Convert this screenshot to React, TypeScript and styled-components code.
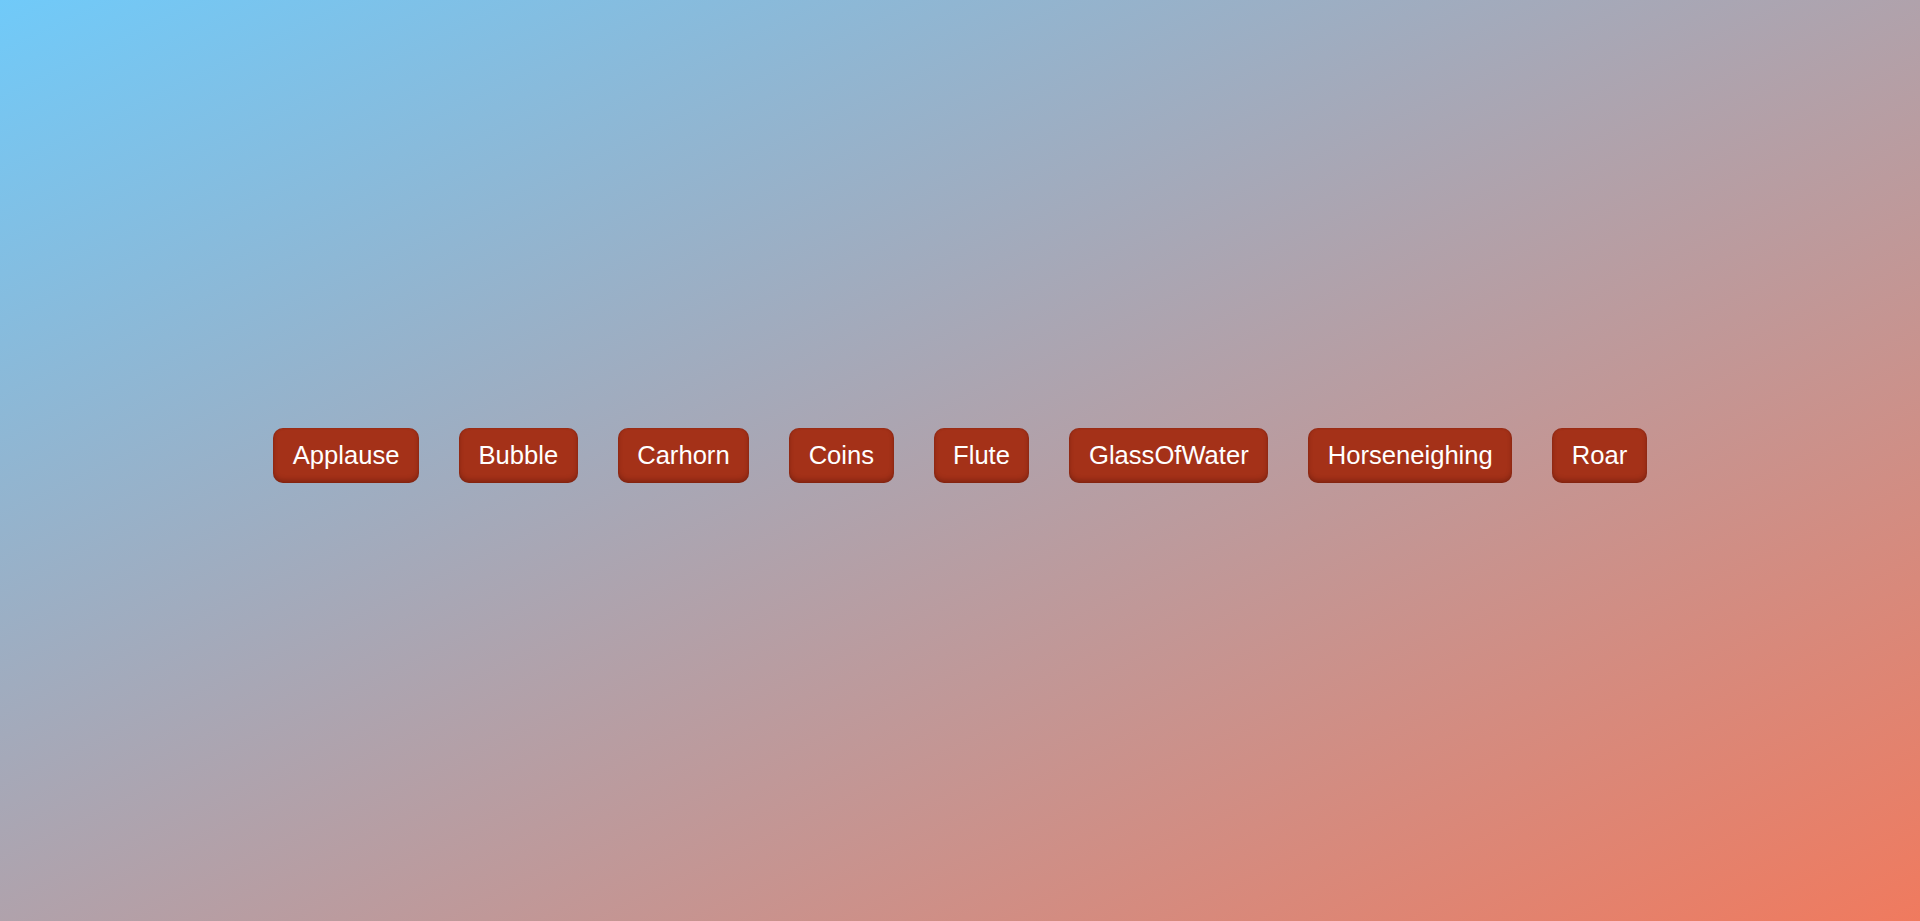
import React from "react";
import styled, { createGlobalStyle } from "styled-components";

const Global = createGlobalStyle`
  html, body { margin: 0; padding: 0; }
  body {
    font-family: "Liberation Sans", Arial, sans-serif;
    background: linear-gradient(to bottom right, #70caf9, #f07a5e);
    min-height: 100vh;
  }
`;

const Page = styled.main`
  height: 921px;
  display: flex;
  align-items: center;
  justify-content: center;
  padding-bottom: 10px;
  box-sizing: border-box;
`;

const Row = styled.div`
  display: flex;
  gap: 40px;
  align-items: center;
`;

const SoundButton = styled.button`
  font-family: "Liberation Sans", Arial, sans-serif;
  font-size: 25.6px;
  line-height: normal;
  color: #ffffff;
  background: #a43118;
  border: none;
  border-radius: 10px;
  padding: 13px 19.5px;
  cursor: pointer;
  box-shadow: inset 0 -3px 5px rgba(60, 10, 0, 0.3), inset 0 0 2px rgba(60, 10, 0, 0.2);
`;

const sounds = ["Applause", "Bubble", "Carhorn", "Coins", "Flute", "GlassOfWater", "Horseneighing", "Roar"];

export default function App() {
  return (
    <>
      <Global />
      <Page>
        <Row>
          {sounds.map((s) => (
            <SoundButton key={s}>{s}</SoundButton>
          ))}
        </Row>
      </Page>
    </>
  );
}
